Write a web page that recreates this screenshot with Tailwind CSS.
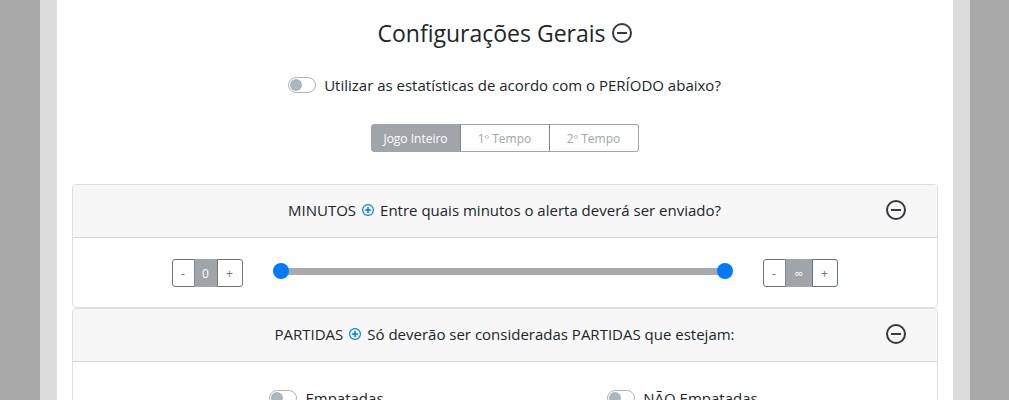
<!DOCTYPE html>
<html lang="pt-BR">
<head>
    <meta charset="UTF-8">
    <meta name="viewport" content="width=device-width, initial-scale=1.0">
    <title>Configurações Gerais</title>

    <!-- Tailwind CSS -->
    <script src="https://cdn.jsdelivr.net/npm/@tailwindcss/browser@4"></script>
</head>
<body class="bg-[#a9a9a9] font-['Open_Sans','Noto_Sans',sans-serif] text-[15px] leading-6 text-[#212529]">
    <div class="max-w-[930px] mx-auto px-[17px] bg-[#dcdcdc]">
        <main class="min-h-screen bg-white px-[15px] pt-4">

            <!-- Title -->
            <div class="flex items-center justify-center gap-1.5">
                <h1 class="text-[23px] leading-[34px]">Configurações Gerais</h1>
                <button type="button" aria-label="Recolher configurações gerais" class="cursor-pointer text-[#343a40]">
                    <svg class="size-5" viewBox="0 0 20 20" fill="none" stroke="currentColor" stroke-width="2"><circle cx="10" cy="10" r="9"/><path d="M5 10h10"/></svg>
                </button>
            </div>

            <!-- Period -->
            <div class="mt-[23px] flex items-center justify-center gap-2">
                <input type="checkbox" id="usePeriod" class="appearance-none shrink-0 w-7 h-4 p-px rounded-full border border-[#adb5bd] bg-white before:block before:size-3 before:rounded-full before:bg-[#adb5bd] checked:bg-[#007bff] checked:border-[#007bff] checked:before:bg-white checked:before:ml-3">
                <label for="usePeriod">Utilizar as estatísticas de acordo com o PERÍODO abaixo?</label>
            </div>

            <div class="mt-[27px] flex justify-center text-xs text-[#a0a5aa]">
                <button type="button" class="w-[90px] h-7 pt-px rounded-l-[3px] border border-[#a0a5aa] bg-[#a0a5aa] text-white">Jogo Inteiro</button>
                <button type="button" class="w-[90px] h-7 pt-px -ml-px border border-[#a0a5aa] border-l-[#7f878e]">1º Tempo</button>
                <button type="button" class="w-[90px] h-7 pt-px -ml-px rounded-r-[3px] border border-[#a0a5aa] border-l-[#7f878e]">2º Tempo</button>
            </div>

            <!-- Minutos -->
            <section class="mt-8 rounded border border-[#dfdfdf] overflow-hidden">
                <header class="grid grid-cols-[1fr_auto_1fr] items-center h-[53px] px-[31px] pb-0.5 bg-[#f7f7f7] border-b border-[#d8d8d8]">
                    <h2 class="col-start-2 flex items-center gap-1.5">
                        MINUTOS
                        <button type="button" aria-label="Ajuda sobre minutos" class="cursor-pointer text-[#007bff]">
                            <svg class="size-3" viewBox="0 0 12 12" fill="none" stroke="currentColor"><circle cx="6" cy="6" r="5.4" stroke-width="1.2"/><path d="M3 6h6M6 3v6" stroke-width="1.6"/></svg>
                        </button>
                        Entre quais minutos o alerta deverá ser enviado?
                    </h2>
                    <button type="button" aria-label="Recolher minutos" class="justify-self-end cursor-pointer text-[#343a40]">
                        <svg class="size-5" viewBox="0 0 20 20" fill="none" stroke="currentColor" stroke-width="2"><circle cx="10" cy="10" r="9"/><path d="M5 10h10"/></svg>
                    </button>
                </header>
                <div class="flex gap-[30px] px-[99px] pt-[21px] pb-5">
                    <div class="flex text-xs text-[#6c757d]">
                        <button type="button" id="minDown" aria-label="Diminuir mínimo" class="w-[23px] h-7 pt-px rounded-l-[3px] border border-[#6c757d]">-</button>
                        <output id="minValue" class="w-[24px] h-7 pt-px -ml-px flex items-center justify-center border border-[#a0a5aa] border-l-[#7f878e] bg-[#a0a5aa] text-white">0</output>
                        <button type="button" id="minUp" aria-label="Aumentar mínimo" class="w-[26px] h-7 pt-px -ml-px rounded-r-[3px] border border-[#6c757d]">+</button>
                    </div>

                    <div class="relative flex-1 h-4 mt-1 flex items-center">
                        <div class="flex-1 h-[7px] mx-2 bg-[#a9a9a9]"></div>
                        <input type="range" id="minRange" aria-label="Minuto inicial" min="0" max="91" value="0" class="absolute inset-0 w-full h-4 appearance-none bg-transparent pointer-events-none [&::-webkit-slider-thumb]:pointer-events-auto [&::-webkit-slider-thumb]:appearance-none [&::-webkit-slider-thumb]:size-4 [&::-webkit-slider-thumb]:rounded-full [&::-webkit-slider-thumb]:bg-[#007bff]">
                        <input type="range" id="maxRange" aria-label="Minuto final" min="0" max="91" value="91" class="absolute inset-0 w-full h-4 appearance-none bg-transparent pointer-events-none [&::-webkit-slider-thumb]:pointer-events-auto [&::-webkit-slider-thumb]:appearance-none [&::-webkit-slider-thumb]:size-4 [&::-webkit-slider-thumb]:rounded-full [&::-webkit-slider-thumb]:bg-[#007bff]">
                    </div>

                    <div class="flex text-xs text-[#6c757d]">
                        <button type="button" id="maxDown" aria-label="Diminuir máximo" class="w-[23px] h-7 pt-px rounded-l-[3px] border border-[#6c757d]">-</button>
                        <output id="maxValue" class="w-[28px] h-7 pt-px -ml-px flex items-center justify-center border border-[#a0a5aa] border-l-[#7f878e] bg-[#a0a5aa] text-white">∞</output>
                        <button type="button" id="maxUp" aria-label="Aumentar máximo" class="w-[26px] h-7 pt-px -ml-px rounded-r-[3px] border border-[#6c757d]">+</button>
                    </div>
                </div>
            </section>

            <!-- Partidas -->
            <section class="rounded border border-[#dfdfdf] overflow-hidden">
                <header class="grid grid-cols-[1fr_auto_1fr] items-center h-[53px] px-[31px] pb-0.5 bg-[#f7f7f7] border-b border-[#d8d8d8]">
                    <h2 class="col-start-2 flex items-center gap-1.5">
                        PARTIDAS
                        <button type="button" aria-label="Ajuda sobre partidas" class="cursor-pointer text-[#007bff]">
                            <svg class="size-3" viewBox="0 0 12 12" fill="none" stroke="currentColor"><circle cx="6" cy="6" r="5.4" stroke-width="1.2"/><path d="M3 6h6M6 3v6" stroke-width="1.6"/></svg>
                        </button>
                        Só deverão ser consideradas PARTIDAS que estejam:
                    </h2>
                    <button type="button" aria-label="Recolher partidas" class="justify-self-end cursor-pointer text-[#343a40]">
                        <svg class="size-5" viewBox="0 0 20 20" fill="none" stroke="currentColor" stroke-width="2"><circle cx="10" cy="10" r="9"/><path d="M5 10h10"/></svg>
                    </button>
                </header>
                <div class="grid grid-cols-2 px-[76px] pt-6 pb-5">
                    <div class="flex items-center justify-center gap-2">
                        <input type="checkbox" id="tied" class="appearance-none shrink-0 w-7 h-4 p-px rounded-full border border-[#adb5bd] bg-white before:block before:size-3 before:rounded-full before:bg-[#adb5bd] checked:bg-[#007bff] checked:border-[#007bff] checked:before:bg-white checked:before:ml-3">
                        <label for="tied">Empatadas</label>
                    </div>
                    <div class="flex items-center justify-center gap-2">
                        <input type="checkbox" id="notTied" class="appearance-none shrink-0 w-7 h-4 p-px rounded-full border border-[#adb5bd] bg-white before:block before:size-3 before:rounded-full before:bg-[#adb5bd] checked:bg-[#007bff] checked:border-[#007bff] checked:before:bg-white checked:before:ml-3">
                        <label for="notTied">NÃO Empatadas</label>
                    </div>
                </div>
            </section>
        </main>
    </div>

    <script>
        // Keep the counters in step with the slider
        function bindRange(name) {
            const range = document.getElementById(name + 'Range');
            const output = document.getElementById(name + 'Value');
            const update = () => {
                output.textContent = range.value === range.max ? '∞' : range.value;
            };

            range.addEventListener('input', update);
            document.getElementById(name + 'Down').addEventListener('click', () => {
                range.stepDown();
                update();
            });
            document.getElementById(name + 'Up').addEventListener('click', () => {
                range.stepUp();
                update();
            });
        }

        bindRange('min');
        bindRange('max');
    </script>
</body>
</html>
